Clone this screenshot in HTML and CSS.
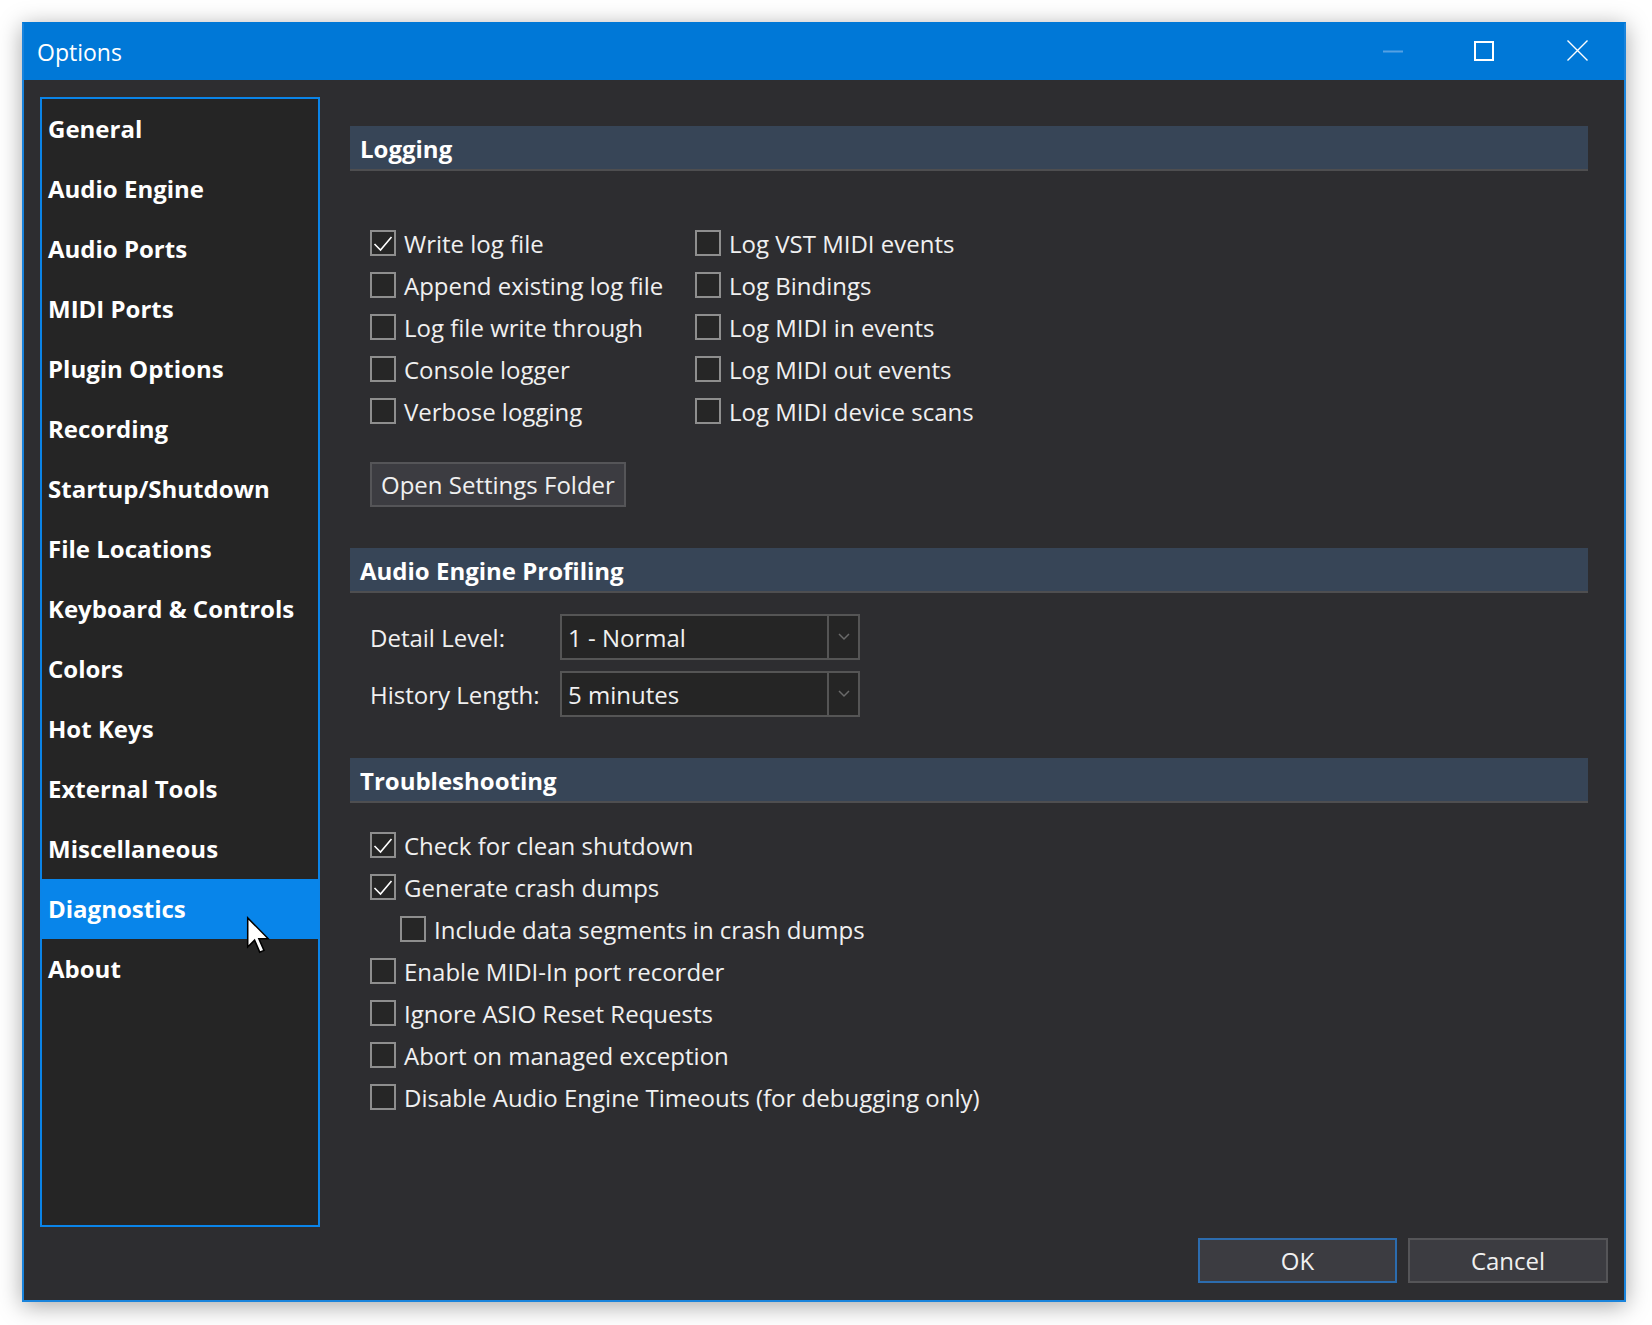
FILE: index.html
```html
<!DOCTYPE html>
<html>
<head>
<meta charset="utf-8">
<title>Options</title>
<link rel="stylesheet" href="styles.css">
</head>
<body>
<div class="window">
  <div class="titlebar">
    <div class="title">Options</div>
    <div class="winbtns">
      <svg class="wb-min" width="20" height="20" viewBox="0 0 20 20"><line x1="0" y1="10.5" x2="20" y2="10.5" stroke="#55a1e3" stroke-width="2"/></svg>
      <svg class="wb-max" width="20" height="20" viewBox="0 0 20 20"><rect x="1" y="1" width="18" height="18" fill="none" stroke="#ffffff" stroke-width="2"/></svg>
      <svg class="wb-close" width="21" height="21" viewBox="0 0 21 21"><path d="M0.5 0.5 L20.5 20.5 M20.5 0.5 L0.5 20.5" stroke="#ffffff" stroke-width="1.4"/></svg>
    </div>
  </div>
  <div class="body">
    <div class="main">
      <div class="sidebar">
        <div class="nav-item">General</div>
        <div class="nav-item">Audio Engine</div>
        <div class="nav-item">Audio Ports</div>
        <div class="nav-item">MIDI Ports</div>
        <div class="nav-item">Plugin Options</div>
        <div class="nav-item">Recording</div>
        <div class="nav-item">Startup/Shutdown</div>
        <div class="nav-item">File Locations</div>
        <div class="nav-item">Keyboard &amp; Controls</div>
        <div class="nav-item">Colors</div>
        <div class="nav-item">Hot Keys</div>
        <div class="nav-item">External Tools</div>
        <div class="nav-item">Miscellaneous</div>
        <div class="nav-item active">Diagnostics</div>
        <div class="nav-item">About</div>
      </div>
      <div class="content">
        <div class="section-header">Logging</div>
        <div class="log-grid">
          <label class="check"><span class="box checked"><svg width="22" height="22" viewBox="0 0 22 22"><polyline points="2.5,12 8.5,18 19.5,5" fill="none" stroke="#ffffff" stroke-width="1.6"/></svg></span>Write log file</label>
          <label class="check"><span class="box"></span>Append existing log file</label>
          <label class="check"><span class="box"></span>Log file write through</label>
          <label class="check"><span class="box"></span>Console logger</label>
          <label class="check"><span class="box"></span>Verbose logging</label>
          <label class="check"><span class="box"></span>Log VST MIDI events</label>
          <label class="check"><span class="box"></span>Log Bindings</label>
          <label class="check"><span class="box"></span>Log MIDI in events</label>
          <label class="check"><span class="box"></span>Log MIDI out events</label>
          <label class="check"><span class="box"></span>Log MIDI device scans</label>
        </div>
        <div class="btn-row"><div class="btn">Open Settings Folder</div></div>

        <div class="section-header gap-top">Audio Engine Profiling</div>
        <div class="combo-grid">
          <div class="combo-label">Detail Level:</div>
          <div class="combo"><div class="combo-val">1 - Normal</div><div class="combo-arrow"><svg width="12" height="8" viewBox="0 0 12 8"><polyline points="1,1 6,6 11,1" fill="none" stroke="#6a6a6a" stroke-width="1.5"/></svg></div></div>
          <div class="combo-label">History Length:</div>
          <div class="combo"><div class="combo-val">5 minutes</div><div class="combo-arrow"><svg width="12" height="8" viewBox="0 0 12 8"><polyline points="1,1 6,6 11,1" fill="none" stroke="#6a6a6a" stroke-width="1.5"/></svg></div></div>
        </div>

        <div class="section-header gap-top">Troubleshooting</div>
        <div class="trouble-list">
          <label class="check"><span class="box checked"><svg width="22" height="22" viewBox="0 0 22 22"><polyline points="2.5,12 8.5,18 19.5,5" fill="none" stroke="#ffffff" stroke-width="1.6"/></svg></span>Check for clean shutdown</label>
          <label class="check"><span class="box checked"><svg width="22" height="22" viewBox="0 0 22 22"><polyline points="2.5,12 8.5,18 19.5,5" fill="none" stroke="#ffffff" stroke-width="1.6"/></svg></span>Generate crash dumps</label>
          <label class="check indent"><span class="box"></span>Include data segments in crash dumps</label>
          <label class="check"><span class="box"></span>Enable MIDI-In port recorder</label>
          <label class="check"><span class="box"></span>Ignore ASIO Reset Requests</label>
          <label class="check"><span class="box"></span>Abort on managed exception</label>
          <label class="check"><span class="box"></span>Disable Audio Engine Timeouts (for debugging only)</label>
        </div>
      </div>
    </div>
    <div class="footer">
      <div class="btn footer-btn primary">OK</div>
      <div class="btn footer-btn">Cancel</div>
    </div>
  </div>
</div>
<svg class="cursor" width="24" height="38" viewBox="0 0 14 22"><path d="M1 1 L1 18 L5 14 L8 21 L10.5 20 L7.5 13.2 L13 13.2 Z" fill="#ffffff" stroke="#000000" stroke-width="0.9" stroke-linejoin="miter"/></svg>
</body>
</html>
```

FILE: styles.css
```css
* { box-sizing: border-box; }
html, body { margin: 0; padding: 0; }
body {
  background: #ffffff;
  width: 1652px;
  height: 1325px;
  font-family: "Open Sans", "Noto Sans", sans-serif;
  color: #f0f0f0;
  position: relative;
  overflow: hidden;
}
.window {
  margin: 22px 0 0 22px;
  width: 1604px;
  height: 1280px;
  border: 2px solid #1a84dc;
  border-top-color: #0078d7;
  box-shadow: 0 4px 22px rgba(0,0,0,0.35);
  display: flex;
  flex-direction: column;
  background: #2d2d30;
}
.titlebar {
  height: 56px;
  background: #0078d7;
  display: flex;
  align-items: center;
  flex-shrink: 0;
}
.title {
  padding-left: 13px;
  font-size: 23px;
  color: #ffffff;
  flex: 1;
}
.winbtns {
  display: flex;
  align-items: center;
  padding-right: 36px;
  padding-bottom: 3px;
}
.winbtns svg { display: block; }
.wb-max { margin-left: 71px; }
.wb-close { margin-left: 73px; }

.body {
  flex: 1;
  display: flex;
  flex-direction: column;
}
.main {
  display: flex;
  padding: 17px 36px 0 16px;
}
.sidebar {
  width: 280px;
  height: 1130px;
  border: 2px solid #0a84e8;
  background: #252525;
  flex-shrink: 0;
}
.nav-item {
  height: 60px;
  display: flex;
  align-items: center;
  padding-left: 6px;
  padding-bottom: 1px;
  font-weight: 700;
  font-size: 24px;
  color: #ffffff;
}
.nav-item.active { background: #0885ea; }

.content {
  flex: 1;
  margin-left: 30px;
  padding-top: 29px;
}
.section-header {
  height: 45px;
  background: #374557;
  border-bottom: 2px solid #4e4e50;
  display: flex;
  align-items: center;
  padding-left: 10px;
  padding-top: 2px;
  font-weight: 700;
  font-size: 24px;
  color: #ffffff;
}
.gap-top { margin-top: 41px; }

.check {
  height: 42px;
  display: flex;
  align-items: center;
  font-size: 24px;
  color: #f0f0f0;
  white-space: nowrap;
}
.box {
  width: 26px;
  height: 26px;
  border: 2px solid #8e8e8e;
  background: #262626;
  margin-right: 8px;
  flex-shrink: 0;
  display: flex;
  align-items: center;
  justify-content: center;
}
.box svg { display: block; }

.log-grid {
  margin-top: 51px;
  padding-left: 20px;
  display: grid;
  grid-template-columns: 325px auto;
  grid-template-rows: repeat(5, 42px);
  grid-auto-flow: column;
}
.btn-row {
  margin-top: 30px;
  padding-left: 20px;
  display: flex;
}
.btn {
  height: 45px;
  border: 2px solid #555558;
  background: #3c3c41;
  display: flex;
  align-items: center;
  padding: 0 9px;
  font-size: 24px;
  color: #f0f0f0;
}

.combo-grid {
  margin-top: 21px;
  padding-left: 20px;
  display: grid;
  grid-template-columns: 190px 300px;
  grid-auto-rows: 46px;
  row-gap: 11px;
}
.combo-label {
  display: flex;
  align-items: center;
  font-size: 24px;
  color: #f0f0f0;
}
.combo {
  border: 2px solid #555555;
  background: #252525;
  display: flex;
}
.combo-val {
  flex: 1;
  display: flex;
  align-items: center;
  padding-left: 6px;
  font-size: 24px;
  color: #f0f0f0;
}
.combo-arrow {
  width: 31px;
  border-left: 2px solid #555555;
  display: flex;
  align-items: center;
  justify-content: center;
}
.combo-arrow svg { display: block; }

.trouble-list {
  margin-top: 21px;
  padding-left: 20px;
  display: flex;
  flex-direction: column;
}
.check.indent { padding-left: 30px; }

.footer {
  margin-top: 11px;
  display: flex;
  justify-content: flex-end;
  gap: 11px;
  padding-right: 16px;
}
.footer-btn {
  width: 200px;
  justify-content: center;
}
.footer-btn.primary {
  width: 199px;
  border-color: #2c6cae;
}

.cursor {
  position: absolute;
  left: 246px;
  top: 916px;
}
```
